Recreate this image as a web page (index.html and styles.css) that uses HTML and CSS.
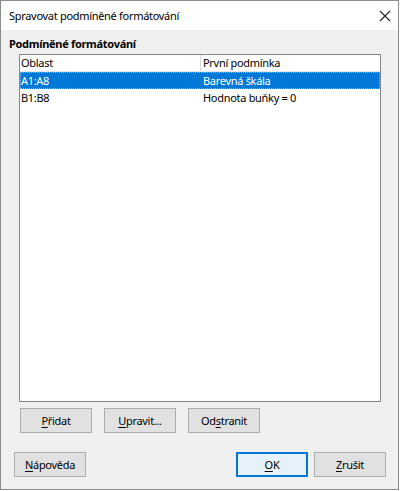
FILE: index.html
```html
<!DOCTYPE html>
<html lang="cs">
<head>
    <meta charset="UTF-8">
    <meta name="viewport" content="width=device-width, initial-scale=1.0">
    <title>Spravovat podmíněné formátování</title>
    <link rel="stylesheet" href="styles.css">
</head>
<body>
    <div class="dialog">
        <div class="titlebar">
            <span class="title">Spravovat podmíněné formátování</span>
            <svg class="close" width="12" height="12" viewBox="0 0 12 12">
                <path d="M1 1 L11 11 M11 1 L1 11" stroke="#222" stroke-width="1.1" fill="none"/>
            </svg>
        </div>
        <div class="content">
            <div class="section-label">Podmíněné formátování</div>
            <div class="list">
                <div class="list-header">
                    <div class="col col-range">Oblast</div>
                    <div class="col col-cond">První podmínka</div>
                </div>
                <div class="row selected">
                    <div class="col col-range">A1:A8</div>
                    <div class="col col-cond">Barevná škála</div>
                </div>
                <div class="row">
                    <div class="col col-range">B1:B8</div>
                    <div class="col col-cond">Hodnota buňky = 0</div>
                </div>
            </div>
            <div class="list-buttons">
                <button class="btn"><u>P</u>řidat</button>
                <button class="btn"><u>U</u>pravit...</button>
                <button class="btn">Od<u>s</u>tranit</button>
            </div>
        </div>
        <div class="footer">
            <button class="btn"><u>N</u>ápověda</button>
            <div class="footer-right">
                <button class="btn default"><u>O</u>K</button>
                <button class="btn"><u>Z</u>rušit</button>
            </div>
        </div>
    </div>
</body>
</html>
```

FILE: styles.css
```css
* {
    margin: 0;
    padding: 0;
    box-sizing: border-box;
}

body {
    background-color: #ffffff;
    font-family: "Noto Sans", "Open Sans", sans-serif;
    font-size: 11px;
    letter-spacing: -0.3px;
    color: #000;
}

.dialog {
    width: 399px;
    height: 490px;
    border: 1px solid #8c8c8c;
    background-color: #f0f0f0;
    display: flex;
    flex-direction: column;
}

.titlebar {
    height: 29px;
    background-color: #fff;
    display: flex;
    align-items: center;
    justify-content: space-between;
    padding: 0 7px 0 8px;
}

.title {
    font-size: 11px;
    color: #000;
}

.close {
    display: block;
    margin-top: 1px;
}

.content {
    padding: 5px 17px 0 8px;
}

.section-label {
    font-weight: bold;
    height: 19px;
    line-height: 17px;
}

.list {
    margin-left: 10px;
    height: 348px;
    background-color: #fff;
    border: 1px solid #828790;
}

.list-header {
    display: flex;
    height: 17px;
    line-height: 16px;
    border-bottom: 1px solid #e5e5e5;
}

.list-header .col-range {
    border-right: 1px solid #d9d9d9;
}

.col {
    padding-left: 1px;
    white-space: nowrap;
}

.col-range {
    width: 181px;
}

.col-cond {
    flex: 1;
    padding-left: 2px;
}

.row {
    display: flex;
    height: 17px;
    line-height: 17px;
}

.row.selected {
    background-color: #0078d7;
    color: #fff;
    outline: 1px dotted #8fb8e0;
    outline-offset: -1px;
}

.list-buttons {
    display: flex;
    gap: 12px;
    margin: 6px 0 0 11px;
}

.btn {
    width: 72px;
    height: 25px;
    background-color: #e1e1e1;
    border: 1px solid #adadad;
    font-family: inherit;
    font-size: 11px;
    letter-spacing: -0.3px;
    color: #000;
}

.btn.default {
    border: 1px solid #0078d7;
    box-shadow: inset 0 0 0 1px #0078d7;
    background-color: #e5f1fb;
}

.btn u {
    text-decoration-thickness: 1px;
    text-underline-offset: 2px;
}

.footer {
    display: flex;
    justify-content: space-between;
    margin-top: auto;
    padding: 0 12px 12px 13px;
}

.footer-right {
    display: flex;
    gap: 6px;
}
```
